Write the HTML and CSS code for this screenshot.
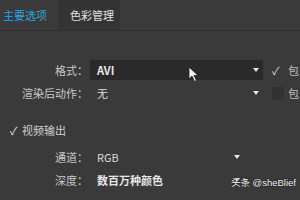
FILE: index.html
```html
<!DOCTYPE html>
<html lang="zh">
<head>
<meta charset="utf-8">
<link rel="stylesheet" href="styles.css">
</head>
<body>
<div class="page">
  <div class="tabs">
    <div class="tab active">主要选项</div>
    <div class="tab sel">色彩管理</div>
  </div>
  <div class="content">
    <div class="grid top">
      <div class="label">格式：</div>
      <div class="select dark"><span class="val b">AVI</span><span class="arrow"></span></div>
      <div class="chk"><span class="tick">✓</span><span class="ct">包</span></div>
      <div class="label">渲染后动作：</div>
      <div class="select"><span class="val">无</span><span class="arrow"></span></div>
      <div class="chk"><span class="box"></span><span class="ct">包</span></div>
    </div>
    <div class="section"><span class="tick2">✓</span><span class="sect">视频输出</span></div>
    <div class="grid bottom">
      <div class="label">通道：</div>
      <div class="select short"><span class="val">RGB</span><span class="arrow"></span></div>
      <div class="label">深度：</div>
      <div class="select short"><span class="val b">数百万种颜色</span><span class="arrow"></span></div>
    </div>
  </div>
  <svg class="cursor" width="11" height="17" viewBox="0 0 11 17"><path d="M1 1 L1 13 L4 10 L6.5 15.5 L8.5 14.5 L6 9.5 L10 9.5 Z" fill="#f2f2f2" stroke="#222" stroke-width="0.8"/></svg>
  <div class="wm">头条 @sheBlief</div>
</div>
</body>
</html>
```
FILE: styles.css
```css
* { box-sizing: border-box; }
html, body { margin: 0; padding: 0; }
body {
  width: 300px; height: 200px; overflow: hidden;
  background: #3a3a3a;
  font-family: "Noto Sans CJK SC", "Noto Sans", sans-serif;
  font-size: 11px; color: #cfcfcf;
}
.page { position: relative; width: 300px; height: 200px; }
.tabs {
  display: flex; height: 31px;
  border-bottom: 1px solid #303030;
}
.tab { height: 30px; line-height: 30px; white-space: nowrap; }
.tab.active { color: #3e9fd3; padding-left: 3px; width: 58px; }
.tab.sel { background: #343434; width: 62px; padding-left: 12px; color: #e2e2e2; }
.content { padding-top: 29px; }
.grid { display: grid; align-items: center; }
.grid.top { grid-template-columns: 88px 175px 37px; row-gap: 3px; }
.grid.bottom { grid-template-columns: 88px 157px; row-gap: 3px; margin-top: 9px; }
.label { text-align: right; color: #c8c8c8; white-space: nowrap; }
.select {
  margin-left: 2px; height: 20px; display: flex; align-items: center;
  justify-content: space-between; padding: 0 4px 0 7px;
}
.select.dark { background: #2a2a2a; }
.select.short { padding-right: 5px; }
.val { color: #dcdcdc; white-space: nowrap; }
.val.b { font-weight: bold; color: #e6e6e6; }
.arrow {
  width: 0; height: 0;
  border-left: 3.5px solid transparent; border-right: 3.5px solid transparent;
  border-top: 4px solid #e8e8e8;
}
.chk { display: flex; align-items: center; padding-left: 9px; gap: 4px; white-space: nowrap; }
.tick { width: 12px; color: #dadada; font-size: 11px; }
.box { width: 12px; height: 13px; background: #323232; flex: none; }
.ct { color: #bdbdbd; }
.section { display: flex; align-items: center; margin-top: 19px; padding-left: 10px; height: 16px; }
.tick2 { width: 12px; color: #e0e0e0; }
.sect { color: #cfcfcf; }
.cursor { position: absolute; left: 188px; top: 66px; }
.wm {
  position: absolute; right: 4px; top: 175px; white-space: nowrap;
  font-family: "Liberation Sans", "Noto Sans CJK SC", sans-serif;
  font-size: 9.5px; color: #f4f4f4; text-shadow: 0 0 2px #000;
}
```
